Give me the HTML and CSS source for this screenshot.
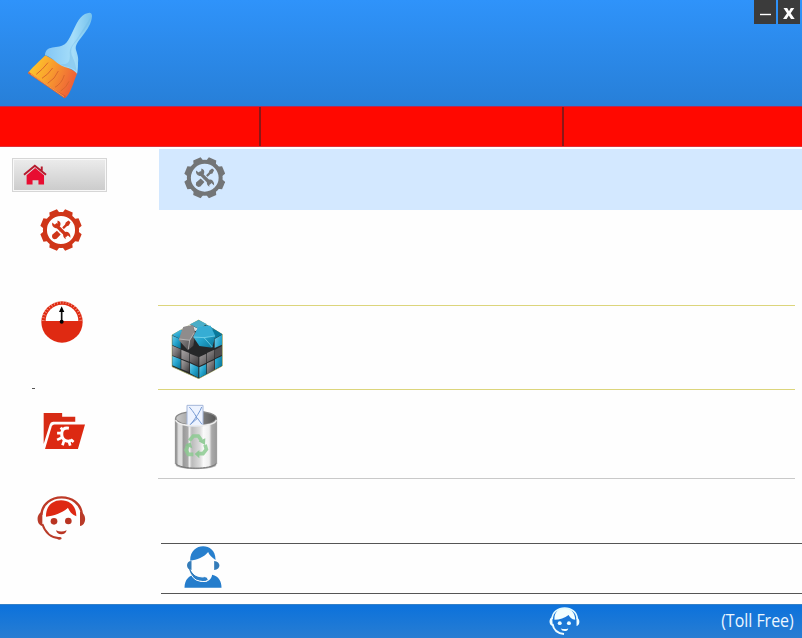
FILE: index.html
```
<!DOCTYPE html>
<html lang="en">
<head>
<meta charset="utf-8">
<title>System Cleaner</title>
<link rel="stylesheet" href="styles.css">
</head>
<body>
<svg class="defs" aria-hidden="true">
  <defs>
    <linearGradient id="handle" x1="0" x2="1"><stop offset="0" stop-color="#83c6f5"/><stop offset=".6" stop-color="#a6def9"/><stop offset="1" stop-color="#75c2ed"/></linearGradient>
    <linearGradient id="bristle" x1="0" y1="0" x2="1" y2=".35"><stop offset="0" stop-color="#fed32c"/><stop offset=".45" stop-color="#faa62d"/><stop offset="1" stop-color="#ee6337"/></linearGradient>
    <linearGradient id="steel"><stop offset="0" stop-color="#777"/><stop offset=".08" stop-color="#ddd"/><stop offset=".16" stop-color="#ddd"/><stop offset=".19" stop-color="#999"/><stop offset=".3" stop-color="#aaa"/><stop offset=".34" stop-color="#eee"/><stop offset=".4" stop-color="#bbb"/><stop offset=".6" stop-color="#ddd"/><stop offset=".68" stop-color="#fafafa"/><stop offset=".82" stop-color="#eee"/><stop offset=".88" stop-color="#aaa"/><stop offset="1" stop-color="#999"/></linearGradient>
    <linearGradient id="inside"><stop offset="0" stop-color="#ccc"/><stop offset="1" stop-color="#555"/></linearGradient>
    <linearGradient id="cyan" x1="0" y1="0" x2="1" y2="1"><stop offset="0" stop-color="#6ecbe8"/><stop offset=".5" stop-color="#24a4cc"/><stop offset="1" stop-color="#087294"/></linearGradient>
    <linearGradient id="gray" x1="0" y1="0" x2="1" y2="1"><stop offset="0" stop-color="#a9a6a6"/><stop offset=".55" stop-color="#706d6e"/><stop offset="1" stop-color="#383637"/></linearGradient>
    <symbol id="tools" viewBox="0 0 124 124">
      <circle cx="62" cy="62" r="47.500" fill="none" stroke="currentColor" stroke-width="12"/>
      <g fill="currentColor">
        <g id="teeth"><path id="tooth" d="M46 15 50 1h24l4 14z" transform="rotate(22.5 62 62)"/><use href="#tooth" transform="rotate(45 62 62)"/><use href="#tooth" transform="rotate(90 62 62)"/><use href="#tooth" transform="rotate(135 62 62)"/></g>
        <use href="#teeth" transform="rotate(180 62 62)"/>
        <path d="M84 34l6 5-5 10-6 2-18 18-5-5 18-18 2-6zM50 64l11 11-12 13q-7 3-11-1t-2-11z"/>
      </g>
      <path d="M47 44 79 79" stroke="var(--back)" stroke-width="14"/>
      <path d="M45 45 80 80" stroke="currentColor" stroke-width="10"/>
      <path d="M36 40l9 7 6-3 1-10q11 3 8 15-4 9-13 8-13-4-11-17zM69 71q9-8 17 0 5 6 4 14l-9-8-6 4 1 8q-10-5-7-18z" fill="currentColor"/>
    </symbol>
  </defs>
</svg>

<header class="header">
  <svg class="brush" viewBox="78 33 204 267">
    <path d="M136 166C105 196 96 204 84 219l110 76c18-12 27-51 38-77z" fill="url(#bristle)"/>
    <path d="M86 215c35 26 73 53 112 73l-4 7L84 220z" fill="#df5931"/>
    <path d="M92 222l100 68" stroke="#f5ba60" stroke-width="2"/>
    <path d="M144 188q-18 22-35 35M158 204q-14 20-32 31M175 213q-10 24-32 37M193 225q-8 26-28 37M207 244q-7 18-25 29" fill="none" stroke="#d9672c" stroke-width="3"/>
    <path d="M262 40c8-5 15 0 14 9-2 22-13 39-29 59-12 16-23 28-19 42 6 18 8 25 6 39q0 23-3 32c-13-15-22-15-37-20-26-9-32-27-59-36 0-10 7-20 17-21 15-4 27-1 42-11 14-10 25-45 42-73 8-10 16-18 26-20z" fill="url(#handle)"/>
    <path d="M273 50c-5 28-29 48-40 70-18 18-22 28-18 44 9 20 14 37 14 49-21-16-33-10-47-21 27 5 29-15 27-34 0-20 19-33 31-56z" fill="#70b9e6" opacity=".4"/>
  </svg>
  <div class="window-buttons">
    <button class="win" aria-label="Minimize"><svg viewBox="0 0 22 24"><path d="M6 14.5h11" stroke="#fff" stroke-width="1.4"/></svg></button>
    <button class="win" aria-label="Close"><svg viewBox="0 0 22 24"><path d="M5.500 8h3.700l1.800 3.300L12.800 8h3.500l-3.600 5.300 4 5.700H13l-2.200-3.600L8.600 19H5l4-5.700z" fill="#fff"/></svg></button>
  </div>
</header>
<nav class="tabs"><span class="tab"></span><span class="tab"></span><span class="tab"></span></nav>

<main class="main">
  <aside class="sidebar">
    <a class="home"><svg viewBox="67 70 73 63"><path d="M78 104 104 82l27 22v28h-17v-13H96v13H78z" fill="#e80d31"/><path d="M70 102 103 75l34 27M124 77v15" fill="none" stroke="#b51b2d" stroke-width="6"/></svg></a>
    <svg class="side-icon side-tools"><use href="#tools"/></svg>
    <svg class="side-icon gauge" viewBox="62 34 126 126">
      <circle cx="125" cy="97" r="62" fill="#df2a12"/>
      <path d="M76 94a49 49 0 0 1 98 0z" fill="#fff"/>
      <path d="M69 94a56 56 0 0 1 112 0" fill="none" stroke="#f8b0a0" stroke-width="8" stroke-dasharray="2 7"/>
      <path d="M124 96V61" stroke="#111" stroke-width="5"/><path d="M124 50l8 17h-16z"/><circle cx="124" cy="96" r="6"/>
    </svg>
    <span class="dash"></span>
    <svg class="side-icon folder" viewBox="69 36 128 113">
      <path d="M71 39h55v11h39v15H99q-8 1-10 8L71 131z" fill="#d72b15"/>
      <path d="M103 73h91l-21 73H75l20-67q2-6 8-6z" fill="#dc2912"/>
      <path d="M146 84q-18-3-21 13-2 18 11 24 9 4 17-1" fill="none" stroke="#fff" stroke-width="9"/>
      <path d="M128 91l-6-9M123 99h-12M126 112l-15 7M132 120l-5 15M146 123l4 13M152 118l8 7" stroke="#fff" stroke-width="8"/>
    </svg>
    <svg class="side-icon agent" viewBox="50 288 147 132">
      <path d="M77 350c-1-32 20-49 45-49 30 0 46 20 46 48-14-5-22-17-25-26-18 17-42 24-66 27z" fill="#de2813"/>
      <path d="M63 345c4-70 117-71 122 0" fill="none" stroke="#bd3a27" stroke-width="7"/>
      <path d="M66 335c-18 4-20 38 0 43zM179 335v43c20-2 21-39 0-43z" fill="#b93b29"/>
      <path d="M66 372q13 40 51 43" fill="none" stroke="#b93b29" stroke-width="6"/>
      <ellipse cx="117" cy="415" rx="7" ry="4" fill="#b93b29"/><circle cx="101" cy="364" r="10" fill="#b93422"/><circle cx="144" cy="363" r="10" fill="#b93422"/><path d="M107 391q16 7 32 0-3 12-16 12t-16-12z" fill="#b93422"/>
    </svg>
  </aside>

  <section class="content">
    <div class="banner"><svg class="banner-icon"><use href="#tools"/></svg></div>
    <div class="row intro"></div>
    <div class="row registry">
      <svg class="cube" viewBox="63 72 156 180">
        <path d="M146 75 66 120v95l80 36 71-38v-95z" fill="#252728" stroke="#b4ba68" stroke-width="2"/>
        <path d="M66 120 92 104l25 12-25 17z" fill="url(#cyan)"/>
        <path d="M94 103l26-14 27 13-24 14z" fill="#ddd"/>
        <path d="M120 88l26-13 24 12-22 16z" fill="#4aaec8"/>
        <path d="M170 89l23 13-20 13-25-11z" fill="#278db0"/><path d="M193 103l24 15-21 12-22-14z" fill="#08799b"/>
        <path d="M67 122l25 11v28l-25-11z" fill="url(#cyan)"/><path d="M67 152l25 11v28l-25-10z" fill="url(#gray)"/><path d="M67 183l25 10v29l-25-11z" fill="url(#cyan)"/>
        <path d="M94 164l24 10v26l-24-9zM120 176l25 10v27l-25-12z" fill="url(#gray)"/>
        <path d="M94 194l24 10v28l-24-10z" fill="url(#gray)"/><path d="M120 205l25 11v32l-25-13z" fill="url(#cyan)"/>
        <path d="M148 186l21-10v27l-21 10zM171 174l22-10v27l-22 11z" fill="url(#gray)"/><path d="M195 164l21-11v26l-21 11z" fill="#504e50"/>
        <path d="M148 217l21-10v31l-21 10z" fill="url(#cyan)"/><path d="M171 205l22-10v30l-22 12z" fill="url(#gray)"/><path d="M195 193l21-10v29l-21 11zM194 132l22-13v30l-22 10z" fill="url(#cyan)"/>
        <path d="M100 96l29-5 7 23-6 38-16 14-28-31z" fill="url(#gray)"/><path d="M100 96l29-5 4 22-14 23-31-4z" fill="#8f8c8c"/><path d="M88 132l31 4 14-23M119 136l-4 27" fill="none" stroke="#d2cfcf" stroke-width="2"/>
        <path d="M145 95l36-3 15 30-9 36-39-5-18-27z" fill="url(#cyan)"/><path d="M145 95l36-3 14 30-33 6-31-2z" fill="#36add4"/><path d="M131 126l31 2 33-5M162 128l25 28" fill="none" stroke="#8be1f2" stroke-width="2"/>
      </svg>
    </div>
    <div class="row trash">
      <svg class="bin" viewBox="74 55 130 198">
        <ellipse cx="139" cy="239" rx="61" ry="11" fill="#bbb"/>
        <path d="M77 98v136c12 20 111 20 124 0V98z" fill="url(#steel)" stroke="#888" stroke-width="2"/>
        <ellipse cx="139" cy="98" rx="61" ry="21" fill="url(#inside)" stroke="#888" stroke-width="4"/>
        <path d="M112 59h48v61q-26 4-48 0z" fill="#edf3ff" stroke="#a4b6d9" stroke-width="3"/>
        <path d="M119 64q19 22 23 35l-23 20M156 64q-6 18-33 52M142 96l15 20" fill="none" stroke="#789bd3" stroke-width="3"/>
        <path d="M78 103c6 24 117 24 122 0" fill="none" stroke="#eee" stroke-width="4"/>
        <path d="M79 234c14 18 105 18 120 0" fill="none" stroke="#777" stroke-width="3"/>
        <g opacity=".85"><g fill="none" stroke="#8dcc92" stroke-width="11"><path d="M119 165l12-14h15l9 13M166 177l4 14-10 13h-17M131 206h-15l-7-13 8-18"/></g>
        <path d="M147 167l20-9-1 20zM149 193v25l-14-13zM105 179l18-9 5 18z" fill="#85c68b"/></g>
      </svg>
    </div>
    <div class="row blank"></div>
    <div class="row support">
      <svg class="person" viewBox="101 34 113 126">
        <path d="M119 78c-1-57 78-57 76-2-11-7-20-17-22-24-12 16-34 23-54 26z" fill="#277fcd"/>
        <path d="M123 79c-18 0-18 26 0 27zM191 79v27c21-1 21-26 0-27z" fill="#347cb9"/>
        <path d="M102 159c1-26 14-36 29-39 8 29 49 30 54 0 20 4 28 20 28 39z" fill="#257dcc"/>
        <path d="M116 104q9 33 31 35 22 5 26-5-3-11-17-7-26-1-36-22" fill="#2c7fc8" stroke="#fff" stroke-width="3"/>
        <path d="M117 99q2 15 14 25" fill="none" stroke="#347cb9" stroke-width="4"/>
      </svg>
    </div>
  </section>
</main>

<footer class="footer">
  <svg class="footer-agent" viewBox="56 50 93 85">
    <path d="M72 89c-3-48 63-47 63 0-11-2-17-9-20-15-12 10-27 14-43 15z" fill="#f1feff"/>
    <path d="M65 87c0-45 76-45 76 0" fill="none" stroke="#e2faff" stroke-width="5"/>
    <path d="M65 81c-11 3-11 25 2 27zM139 81v27c12-3 11-24 0-27z" fill="#effdff"/>
    <path d="M66 101q5 28 35 31" fill="none" stroke="#effdff" stroke-width="6"/>
    <circle cx="88" cy="99" r="6" fill="#effdff"/><circle cx="116" cy="99" r="6" fill="#effdff"/><path d="M91 115q12 4 23 0-2 8-11 8t-12-8z" fill="#effdff"/>
  </svg>
  <span class="toll">(Toll Free)</span>
</footer>
</body>
</html>
```
FILE: styles.css
```
* { box-sizing: border-box; }
body { margin: 0; width: 802px; height: 638px; overflow: hidden; display: flex; flex-direction: column; background: #fefefe; font-family: "Open Sans", "Noto Sans", sans-serif; }
svg { display: block; flex: none; }
.defs { position: absolute; width: 0; height: 0; }
.header { height: 106px; flex: none; display: flex; justify-content: space-between; background: linear-gradient(#2f93fa, #277fd8); }
.brush { width: 68px; height: 89px; margin: 11px 0 0 26px; }
.window-buttons { display: flex; gap: 2px; padding-right: 2px; }
.win { width: 22px; height: 24px; padding: 0; border: 0; background: #3b3b3b; }
.win svg { width: 22px; height: 24px; }
.tabs { height: 41px; flex: none; display: grid; grid-template-columns: 261px 303px 1fr; background: #ff0800; border-top: 1px solid #b52a55; border-bottom: 1px solid #e03038; }
.tab:not(:last-child) { border-right: 2px solid #8b1717; }
.main { height: 457px; flex: none; display: flex; }
.sidebar { width: 158px; display: flex; flex-direction: column; align-items: flex-start; }
.home { width: 95px; height: 34px; margin: 11px 0 0 12px; padding: 5px 0 0 10px; border: 1px solid #d6d6d6; box-shadow: inset 0 0 0 1px #f8f8f8; background: linear-gradient(#ececec, #cbcbcb); }
.home svg { width: 24px; height: 21px; }
.side-tools { width: 42px; height: 42px; margin: 17px 0 0 39.500px; color: #cf3518; --back: #fff; }
.gauge { width: 42px; height: 42px; margin: 50px 0 0 40.500px; }
.dash { width: 3px; height: 1px; margin: 45px 0 0 32px; background: #555; }
.folder { width: 43px; height: 38px; margin: 23px 0 0 42.500px; }
.agent { width: 49px; height: 44px; margin: 46px 0 0 36.500px; }
.content { width: 644px; }
.banner { height: 61px; margin: 2px 0 0 1px; padding: 8px 0 0 24.500px; background: #d3e8ff; }
.banner-icon { width: 41.500px; height: 41.500px; color: #737577; --back: #d3e8ff; }
.row { width: 637px; border-bottom: 1px solid #dcd57c; }
.intro { height: 96px; }
.registry { height: 84px; padding: 13px 0 0 13px; }
.cube { width: 52px; height: 60px; }
.trash { height: 89px; padding: 14px 0 0 16px; border-color: #c9c9c9; }
.bin { width: 44px; height: 66px; }
.blank { width: 641px; height: 65px; margin-left: 3px; border-color: #555; }
.support { width: 641px; height: 50px; margin-left: 3px; padding: 2px 0 0 22.500px; border-color: #555; }
.person { width: 38px; height: 42px; }
.footer { height: 34px; flex: none; display: flex; justify-content: space-between; border-top: 1px solid #3480c7; background: linear-gradient(#0c72dc, #287dd2); }
.footer-agent { width: 31px; height: 28px; margin: 2px 0 0 548.500px; }
.toll { margin: 3px 8px 0 0; color: #edf7ff; font-size: 17.500px; line-height: 24px; white-space: nowrap; transform: scaleX(.91); transform-origin: right; }
```
